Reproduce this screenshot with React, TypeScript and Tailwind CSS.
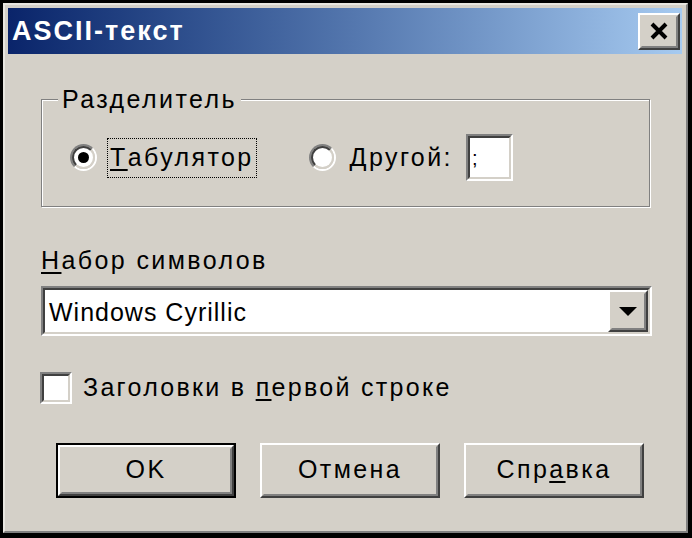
import React from "react";

const font = "font-['Liberation_Sans',Arial,sans-serif]";

const Raised = ({ children, className = "" }: { children?: React.ReactNode; className?: string }) => (
  <div className={`border-2 border-t-white border-l-white border-r-[#404040] border-b-[#404040] bg-[#d4d0c8] ${className}`}>
    <div className="h-full w-full border-2 border-t-[#d4d0c8] border-l-[#d4d0c8] border-r-[#808080] border-b-[#808080] flex items-center justify-center">
      {children}
    </div>
  </div>
);

const Sunken = ({ children, className = "" }: { children?: React.ReactNode; className?: string }) => (
  <div className={`border-2 border-t-[#808080] border-l-[#808080] border-r-white border-b-white ${className}`}>
    <div className="h-full w-full border-2 border-t-[#404040] border-l-[#404040] border-r-[#d4d0c8] border-b-[#d4d0c8] bg-white flex items-center">
      {children}
    </div>
  </div>
);

const Radio = ({ checked }: { checked?: boolean }) => (
  <div className="w-[27px] h-[27px] rounded-full border-2 border-t-[#808080] border-l-[#808080] border-r-white border-b-white">
    <div className="w-full h-full rounded-full border-2 border-t-[#404040] border-l-[#404040] border-r-[#d4d0c8] border-b-[#d4d0c8] bg-white flex items-center justify-center">
      {checked && <div className="w-[11px] h-[11px] rounded-full bg-black" />}
    </div>
  </div>
);

const Button = ({ label, def }: { label: React.ReactNode; def?: boolean }) => (
  <div className={`w-[180px] h-[55px] ${def ? "border-2 border-black" : ""}`}>
    <Raised className="h-full w-full">
      <span className="text-[25px] tracking-[2.4px] text-black">{label}</span>
    </Raised>
  </div>
);

export default function App() {
  return (
    <div className={`${font} w-[692px] h-[538px] bg-black pt-[3px] pl-[3px] pr-[4px] pb-[5px]`}>
      <div className="h-full w-full bg-[#d4d0c8] border-2 border-t-[#e8e6e0] border-l-[#e8e6e0] border-r-[#808080] border-b-[#808080] pt-[3px] pl-[3px] pr-[4px] flex flex-col">
        {/* title bar */}
        <div className="h-[46px] flex items-center justify-between bg-gradient-to-r from-[#0a246a] to-[#a6caf0] pl-[4px] pr-[2px]">
          <span className="text-white font-bold text-[27px] tracking-[2px]">ASCII-текст</span>
          <Raised className="w-[42px] h-[37px]">
            <svg width="20" height="18" viewBox="0 0 20 18">
              <path d="M3 2 L17 16 M17 2 L3 16" stroke="black" strokeWidth="4" />
            </svg>
          </Raised>
        </div>

        <div className="flex flex-col pl-[33px] pr-[33px] pt-[31px]">
          {/* group box */}
          <fieldset className="w-[609px] h-[122px] border border-[#808080] shadow-[inset_1px_1px_0_white,1px_1px_0_white] pl-[16px] pr-0 pt-0 pb-0 m-0">
            <legend className="px-[4px] bg-[#d4d0c8] text-[25px] leading-[28px] tracking-[2.4px] text-black">
              Разделитель
            </legend>
            <div className="flex items-center mt-[21px] ml-[12px]">
              <Radio checked />
              <span className="ml-[10px] px-[2px] h-[40px] flex items-center border border-dotted border-black text-[25px] tracking-[2.4px] text-black">
                <span className="underline underline-offset-[3px]">Т</span>абулятор
              </span>
              <div className="ml-[52px]"><Radio /></div>
              <span className="ml-[14px] text-[25px] tracking-[2.4px] text-black">
                <span className="underline underline-offset-[3px]">Д</span>ругой:
              </span>
              <Sunken className="ml-[13px] w-[47px] h-[47px]">
                <span className="text-[20px] pl-[2px] text-black">;</span>
              </Sunken>
            </div>
          </fieldset>

          {/* charset */}
          <div className="mt-[38px] text-[25px] tracking-[2.4px] text-black leading-[30px]">
            <span className="underline underline-offset-[3px]">Н</span>абор символов
          </div>
          <Sunken className="mt-[11px] w-[611px] h-[50px]">
            <div className="flex-1 pl-[4px] pt-[3px] text-[25px] tracking-[1px] text-black">Windows Cyrillic</div>
            <Raised className="w-[40px] h-[42px]">
              <svg width="18" height="9" viewBox="0 0 18 9">
                <path d="M0 0 H18 L9 9 Z" fill="black" />
              </svg>
            </Raised>
          </Sunken>

          {/* checkbox */}
          <div className="mt-[33px] flex items-center">
            <Sunken className="w-[32px] h-[32px] -ml-[1px]" />
            <span className="ml-[11px] text-[25px] tracking-[2.3px] text-black">
              Заголовки в <span className="underline underline-offset-[3px]">п</span>ервой строке
            </span>
          </div>

          {/* buttons */}
          <div className="mt-[36px] flex gap-[24px] pl-[15px]">
            <Button label="OK" def />
            <Button label="Отмена" />
            <Button label={<><span>Спр</span><span className="underline underline-offset-[3px]">а</span><span>вка</span></>} />
          </div>
        </div>
      </div>
    </div>
  );
}
